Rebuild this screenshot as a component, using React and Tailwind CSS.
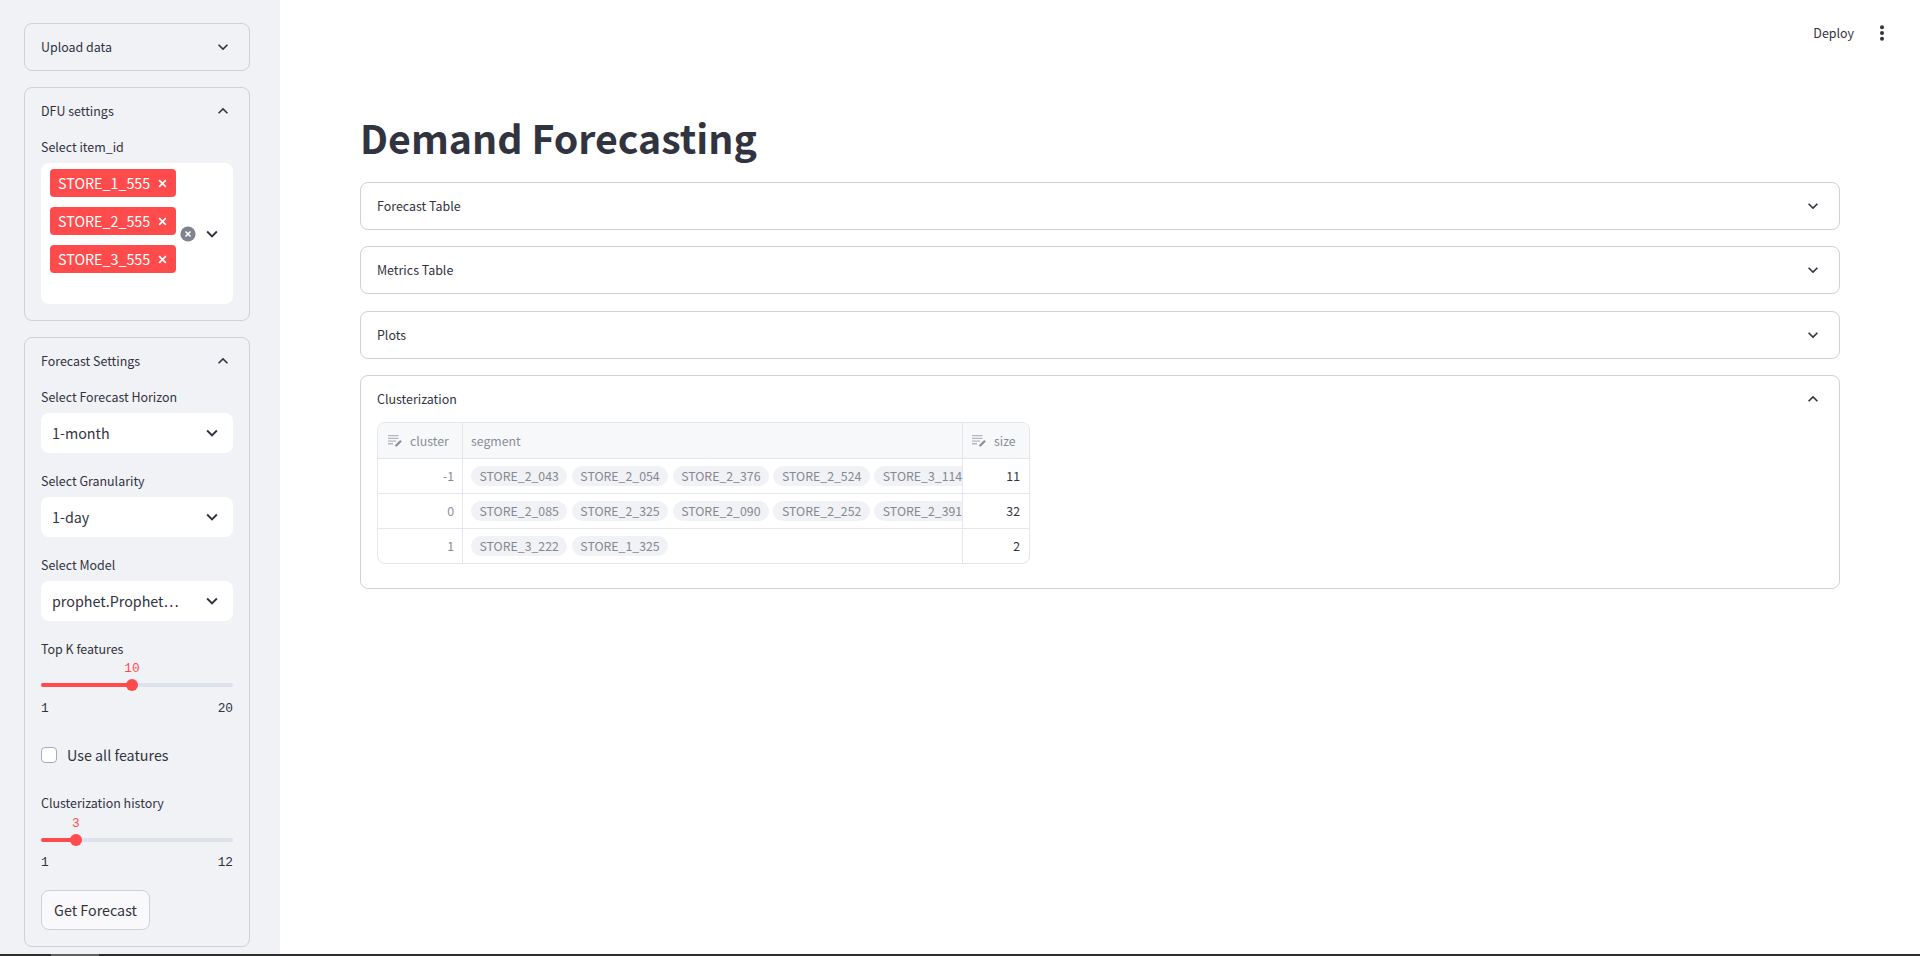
function Chevron({ up, className = "w-5 h-5" }) {
  return (
    <svg viewBox="0 0 24 24" className={className + " fill-[#31333f] shrink-0"}>
      <path d={up ? "M12 8l-6 6 1.41 1.41L12 10.83l4.59 4.58L18 14z" : "M16.59 8.59 12 13.17 7.41 8.59 6 10l6 6 6-6z"} />
    </svg>
  );
}

function Expander({ title, open, children, className = "" }) {
  return (
    <div className={"border border-[#d0d1d6] rounded-lg " + className}>
      <div className="flex items-center justify-between h-[46px] pl-4 pr-4">
        <span className="text-[12.45px] leading-5 text-[#31333f]">{title}</span>
        <Chevron up={open} />
      </div>
      {children}
    </div>
  );
}

function Label({ children, className = "" }) {
  return <div className={"text-[12.45px] leading-5 text-[#31333f] " + className}>{children}</div>;
}

function Tag({ children }) {
  return (
    <div className="flex items-center justify-between w-[126px] h-7 pl-2 pr-[9px] bg-[#ff4b4b] rounded text-white text-[14.3px] leading-5">
      <span>{children}</span>
      <svg viewBox="0 0 8 8" className="w-[9px] h-[9px] stroke-white fill-none"><path d="M1 1l6 6M7 1L1 7" strokeWidth="1.5" /></svg>
    </div>
  );
}

function SelectBox({ value }) {
  return (
    <div className="flex items-center justify-between h-10 bg-white rounded-lg pl-[11px] pr-[10px] mt-[6px]">
      <span className="text-[14.3px] leading-5 text-[#31333f]">{value}</span>
      <Chevron className="w-[22px] h-[22px]" />
    </div>
  );
}

function Slider({ label, value, min, max, pct, trackGap, endGap }) {
  return (
    <div>
      <Label>{label}</Label>
      <div className={"relative h-4 " + trackGap}>
        <div className="absolute top-1/2 -translate-y-1/2 left-0 right-0 h-1 rounded-sm bg-[#dde1eb]"></div>
        <div className="absolute top-1/2 -translate-y-1/2 left-0 h-1 rounded-sm bg-[#ff4b4b]" style={{ width: pct + "%" }}></div>
        <div className="absolute top-1/2 -translate-y-1/2 -translate-x-1/2 w-3 h-3 rounded-full bg-[#ff4b4b]" style={{ left: pct + "%" }}></div>
        <div className="absolute -top-4 -translate-x-1/2 text-[#ff4b4b] text-[12.8px] leading-4 font-['Liberation_Mono',monospace]" style={{ left: pct + "%" }}>{value}</div>
      </div>
      <div className={"flex justify-between text-[12.8px] leading-5 text-[#31333f] font-['Liberation_Mono',monospace] " + endGap}>
        <span>{min}</span>
        <span>{max}</span>
      </div>
    </div>
  );
}

function EditIcon() {
  return (
    <svg viewBox="0 0 14 12" className="w-[14px] h-3 shrink-0">
      <path className="fill-[#b4b7c0]" d="M0 0h10.5v1.3H0zM0 2.7h10.5V4H0zM0 5.4h8v1.3H0zM0 8.1h5v1.3H0z" />
      <path className="fill-[#8d909b]" d="M7.2 10l5-5 1.6 1.6-5 5H7.2z" />
    </svg>
  );
}

function Pill({ children }) {
  return <span className="inline-flex items-center h-5 px-[8.5px] rounded-full bg-[#f0f2f6] text-[12.3px] leading-5 text-[#85888f] whitespace-nowrap shrink-0">{children}</span>;
}

const rows = [
  { c: "-1", s: ["STORE_2_043", "STORE_2_054", "STORE_2_376", "STORE_2_524", "STORE_3_114"], n: "11" },
  { c: "0", s: ["STORE_2_085", "STORE_2_325", "STORE_2_090", "STORE_2_252", "STORE_2_391"], n: "32" },
  { c: "1", s: ["STORE_3_222", "STORE_1_325"], n: "2" },
];

function DataTable() {
  return (
    <div className="w-[653px] border border-[#e4e6eb] rounded-lg overflow-hidden text-[12.3px] leading-5">
      <div className="grid grid-cols-[85px_500px_66px] h-[35px] bg-[#f7f8fa] text-[#8a8d98]">
        <div className="flex items-center gap-2 pl-[10px] border-r border-[#e4e6eb]"><EditIcon /><span>cluster</span></div>
        <div className="flex items-center pl-2 border-r border-[#e4e6eb]">segment</div>
        <div className="flex items-center gap-2 pl-[9px]"><EditIcon /><span>size</span></div>
      </div>
      {rows.map((r) => (
        <div key={r.c} className="grid grid-cols-[85px_500px_66px] h-[35px] border-t border-[#e4e6eb]">
          <div className="flex items-center justify-end pr-2 border-r border-[#e4e6eb] text-[#8a8d98]">{r.c}</div>
          <div className="flex items-center gap-[4.5px] pl-2 border-r border-[#e4e6eb] overflow-hidden">
            {r.s.map((x) => <Pill key={x}>{x}</Pill>)}
          </div>
          <div className="flex items-center justify-end pr-[9px] text-[#31333f]">{r.n}</div>
        </div>
      ))}
    </div>
  );
}

export default function App() {
  return (
    <div className="h-[956px] overflow-hidden flex flex-col font-['Noto_Sans_CJK_JP','Noto_Sans',sans-serif] text-[#31333f] bg-white">
      <div className="flex flex-1 min-h-0">
        <aside className="w-[280px] shrink-0 bg-[#f0f2f6] pt-[23px] pl-6 pr-[30px] flex flex-col gap-4">
          <Expander title="Upload data" />
          <Expander title="DFU settings" open>
            <div className="px-4 pb-4">
              <Label className="mt-[3px]">Select item_id</Label>
              <div className="flex items-center mt-[6px] h-[141px] bg-white rounded-lg pr-[10px]">
                <div className="flex flex-col gap-[10px] pl-[9px] self-start pt-[6px]">
                  <Tag>STORE_1_555</Tag>
                  <Tag>STORE_2_555</Tag>
                  <Tag>STORE_3_555</Tag>
                </div>
                <svg viewBox="0 0 16 16" className="w-4 h-4 ml-1">
                  <circle cx="8" cy="8" r="7.6" className="fill-[#7f838f]" />
                  <path d="M5.5 5.5l5 5M10.5 5.5l-5 5" className="stroke-white" strokeWidth="1.6" />
                </svg>
                <div className="ml-auto"><Chevron className="w-[22px] h-[22px]" /></div>
              </div>
            </div>
          </Expander>
          <Expander title="Forecast Settings" open>
            <div className="px-4 pb-4 flex flex-col">
              <Label className="mt-[3px]">Select Forecast Horizon</Label>
              <SelectBox value="1-month" />
              <Label className="mt-[18px]">Select Granularity</Label>
              <SelectBox value="1-day" />
              <Label className="mt-[18px]">Select Model</Label>
              <SelectBox value="prophet.Prophet…" />
              <div className="mt-[18px]"><Slider label="Top K features" value="10" min="1" max="20" pct={47.4} trackGap="mt-[18px]" endGap="mt-[6px]" /></div>
              <div className="flex items-center gap-[10px] mt-6 h-6">
                <div className="w-4 h-4 rounded border border-[#a8abb5] bg-white"></div>
                <span className="text-[14.3px] leading-5">Use all features</span>
              </div>
              <div className="mt-[26px]"><Slider label="Clusterization history" value="3" min="1" max="12" pct={18.2} trackGap="mt-[19px]" endGap="mt-[5px]" /></div>
              <button className="mt-[17px] w-[109px] h-10 rounded-lg border border-[#d0d1d6] bg-[#f9f9fb] text-[14.3px] leading-5 text-[#31333f]">Get Forecast</button>
            </div>
          </Expander>
        </aside>
        <main className="flex-1 min-w-0 relative px-20">
          <div className="absolute top-[23px] right-7 flex items-center gap-[18px]">
            <span className="text-[12.45px] leading-5">Deploy</span>
            <svg viewBox="0 0 24 24" className="w-5 h-5 fill-[#31333f]"><circle cx="12" cy="5" r="2.4" /><circle cx="12" cy="12" r="2.4" /><circle cx="12" cy="19" r="2.4" /></svg>
          </div>
          <h1 className="pt-[109px] text-[39.3px] leading-[56px] font-bold text-[#31333f]">Demand Forecasting</h1>
          <div className="mt-[17px] flex flex-col gap-4">
            <Expander title="Forecast Table" />
            <Expander title="Metrics Table" />
            <Expander title="Plots" className="mt-px" />
            <Expander title="Clusterization" open>
              <div className="px-4 pb-6"><DataTable /></div>
            </Expander>
          </div>
        </main>
      </div>
      <div className="h-0.5 bg-[#2e2e2e] shrink-0 flex"><div className="ml-[51px] w-12 bg-[#606060]"></div></div>
    </div>
  );
}
